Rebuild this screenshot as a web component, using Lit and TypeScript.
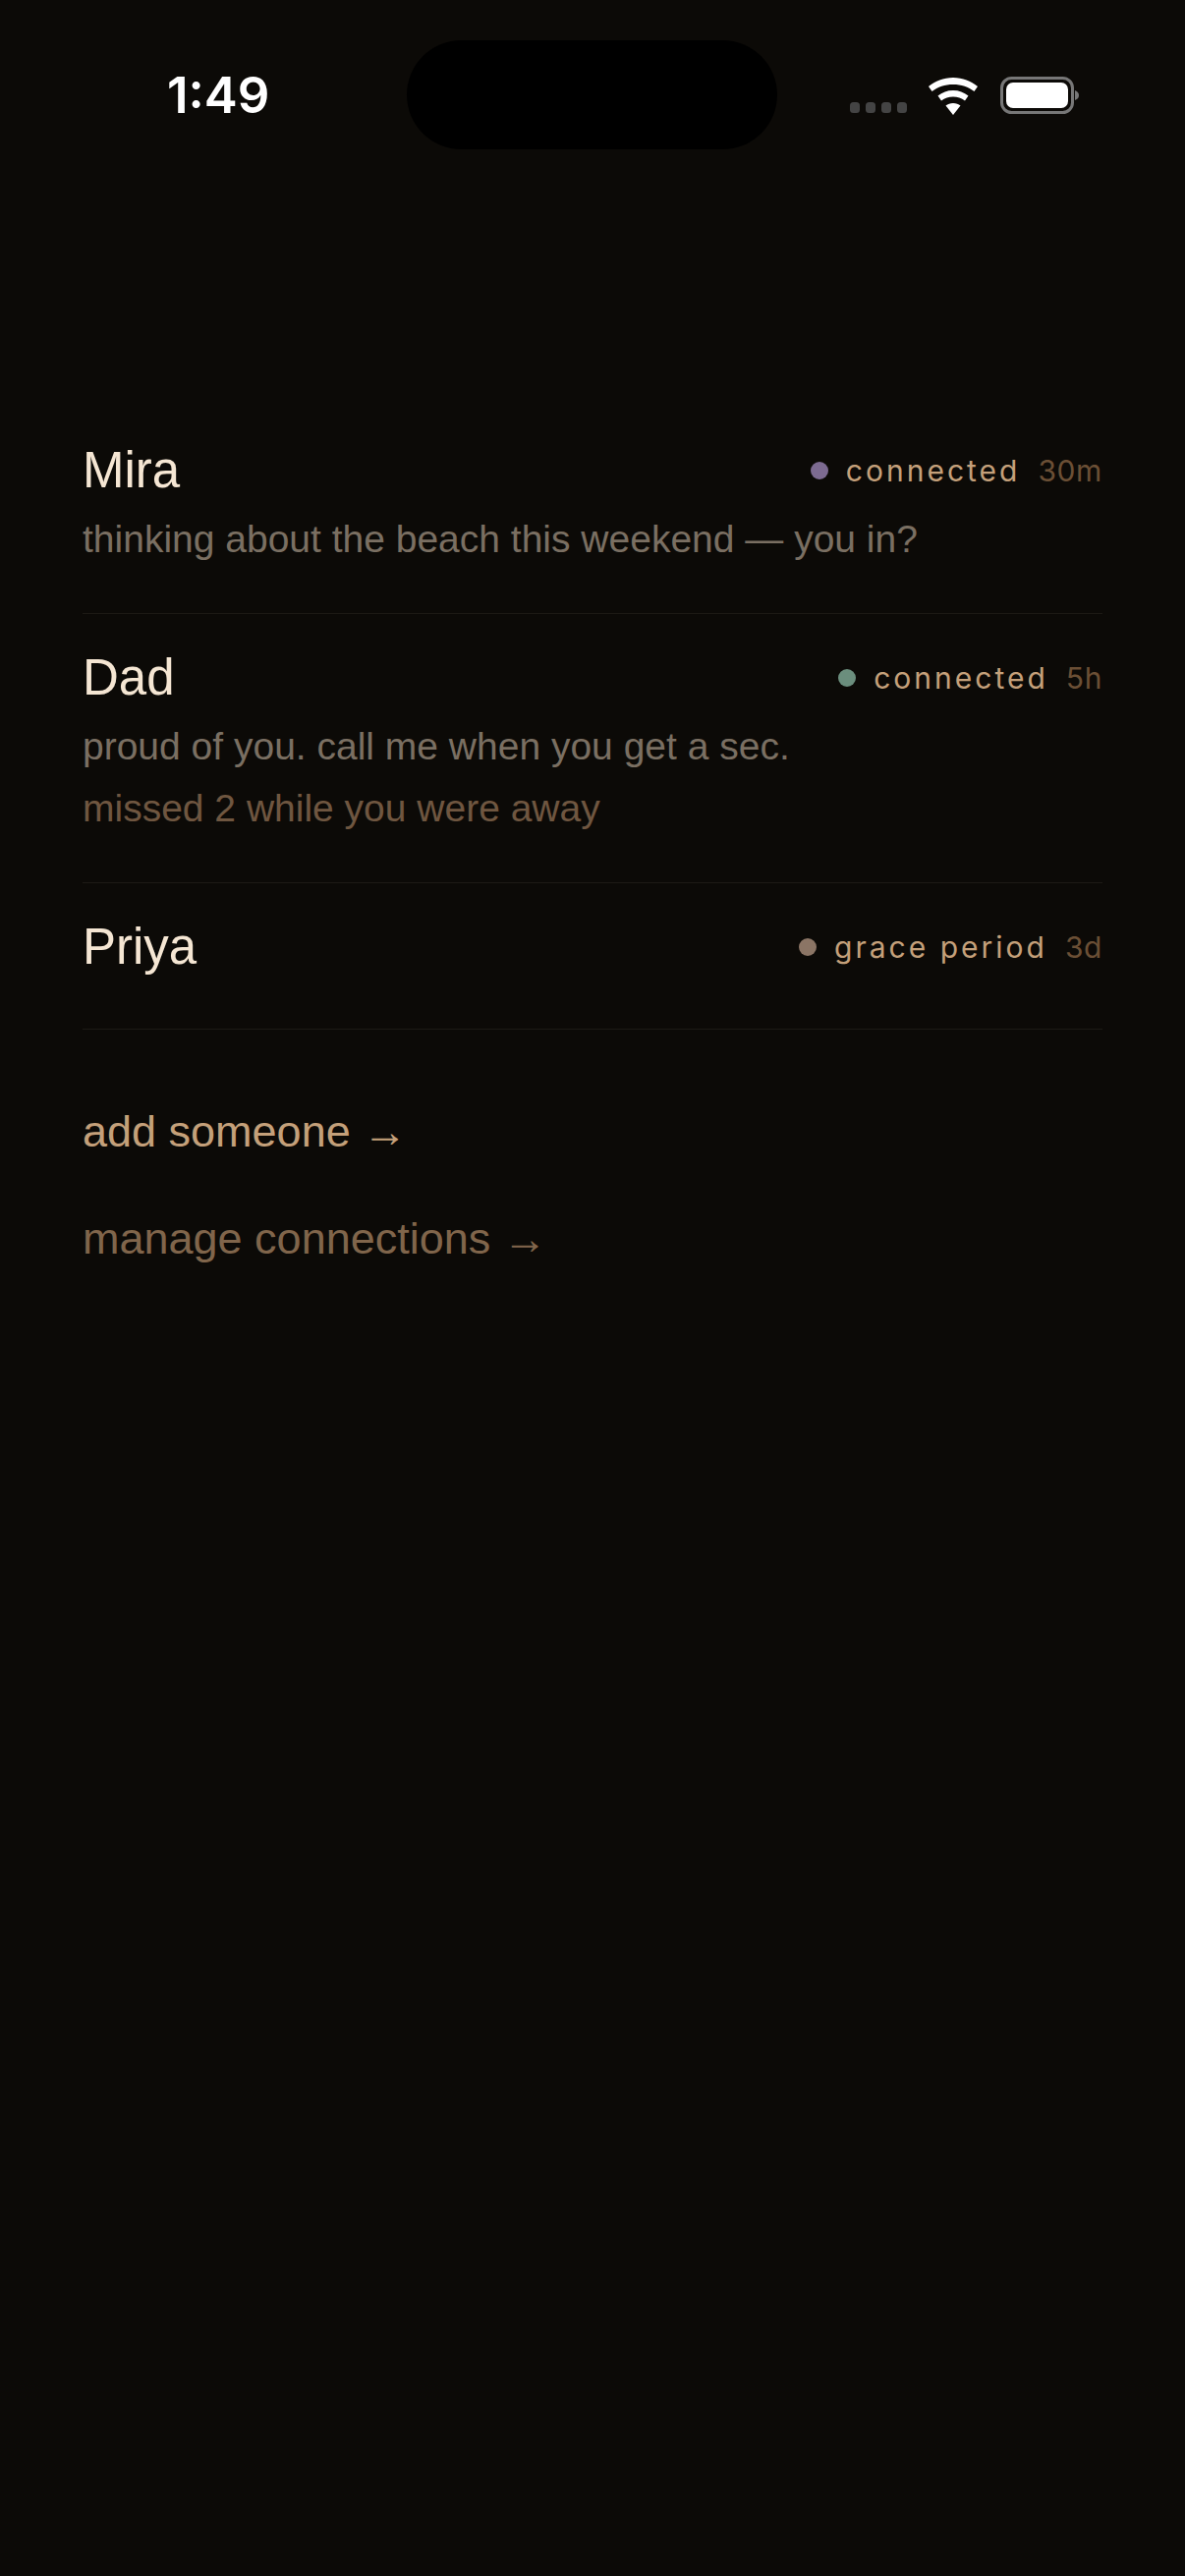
import { LitElement, html, css } from "lit";
import { customElement } from "lit/decorators.js";

const people = [
  { name: "Mira", dot: "#7d6b91", status: "connected", age: "30m", msg: "thinking about the beach this weekend — you in?", missed: "" },
  { name: "Dad", dot: "#6b8e7d", status: "connected", age: "5h", msg: "proud of you. call me when you get a sec.", missed: "missed 2 while you were away" },
  { name: "Priya", dot: "#8b7565", status: "grace period", age: "3d", msg: "", missed: "" },
];

@customElement("app-root")
export class AppRoot extends LitElement {
  static styles = css`
    :host { display: block; width: 1206px; height: 2622px; background: #0c0a07; font-family: "Liberation Sans", Arial, sans-serif; overflow: hidden; }
    .status { position: relative; height: 174px; }
    .time { position: absolute; left: 170px; top: 70px; font: 600 51px/54px Inter, sans-serif; color: #fff; }
    .island { position: absolute; left: 414px; top: 41px; width: 377px; height: 111px; border-radius: 56px; background: #000; }
    .icons { position: absolute; left: 860px; top: 72px; }
    .list { padding: 246px 84px 0; }
    .row { padding: 24px 0 48px; border-bottom: 1px solid #1d1a15; }
    .row + .row { padding-top: 30px; }
    .head { display: flex; align-items: center; justify-content: space-between; height: 70px; }
    .name { font-size: 51px; line-height: 70px; color: #f5e6d3; }
    .meta { display: flex; align-items: center; }
    .dot { width: 18px; height: 18px; border-radius: 50%; margin-right: 18px; }
    .state { font: 400 30px/36px Inter, sans-serif; letter-spacing: 3px; color: #c4a07a; margin-right: 18px; }
    .age { font: 400 30px/36px Inter, sans-serif; letter-spacing: 0.6px; color: #6b4f35; }
    .msg { font-size: 39px; line-height: 54px; margin-top: 8px; color: #7a6f62; }
    .missed { font-size: 39px; line-height: 54px; margin-top: 9px; color: #6f5640; }
    .links { padding: 72px 84px 0; display: flex; flex-direction: column; gap: 46px; }
    .link { font-size: 45px; line-height: 63px; }
    .add { color: #c4a07a; }
    .manage { color: #80654b; }
  `;

  render() {
    return html`
      <div class="status">
        <div class="time">1:49</div>
        <div class="island"></div>
        <svg class="icons" width="240" height="60" viewBox="0 0 240 60">
          <g fill="#444">
            <rect x="5" y="32" width="10" height="11" rx="3.5"/>
            <rect x="21" y="32" width="10" height="11" rx="3.5"/>
            <rect x="37" y="32" width="10" height="11" rx="3.5"/>
            <rect x="53" y="32" width="10" height="11" rx="3.5"/>
          </g>
          <g fill="#fff">
            <path d="M110 7c10 0 18 3.500 25 9l-3.500 5c-6-4.500-13-7-21.500-7s-15.500 2.500-21.500 7l-3.500-5c7-5.500 15-9 25-9z"/>
            <path d="M110 20c6 0 11 2 15.500 5.500l-3.500 5c-3.500-2.500-7.500-4-12-4s-8.500 1.500-12 4l-3.500-5c4.500-3.500 9.500-5.500 15.500-5.500z"/>
            <path d="M110 33c3 0 5.500 1 7.500 2.500l-7.500 9.500-7.500-9.500c2-1.500 4.500-2.500 7.500-2.500z"/>
          </g>
          <rect x="159.500" y="7.500" width="72" height="35" rx="10" fill="none" stroke="#777" stroke-width="3"/>
          <rect x="164" y="12" width="63" height="26" rx="7" fill="#fff"/>
          <path d="M234 20c3 1 4 3 4 5s-1 4-4 5z" fill="#777"/>
        </svg>
      </div>
      <div class="list">
        ${people.map(p => html`
          <div class="row">
            <div class="head">
              <span class="name">${p.name}</span>
              <span class="meta">
                <span class="dot" style="background:${p.dot}"></span>
                <span class="state">${p.status}</span>
                <span class="age">${p.age}</span>
              </span>
            </div>
            ${p.msg ? html`<div class="msg">${p.msg}</div>` : ""}
            ${p.missed ? html`<div class="missed">${p.missed}</div>` : ""}
          </div>
        `)}
      </div>
      <div class="links">
        <div class="link add">add someone →</div>
        <div class="link manage">manage connections →</div>
      </div>
    `;
  }
}
